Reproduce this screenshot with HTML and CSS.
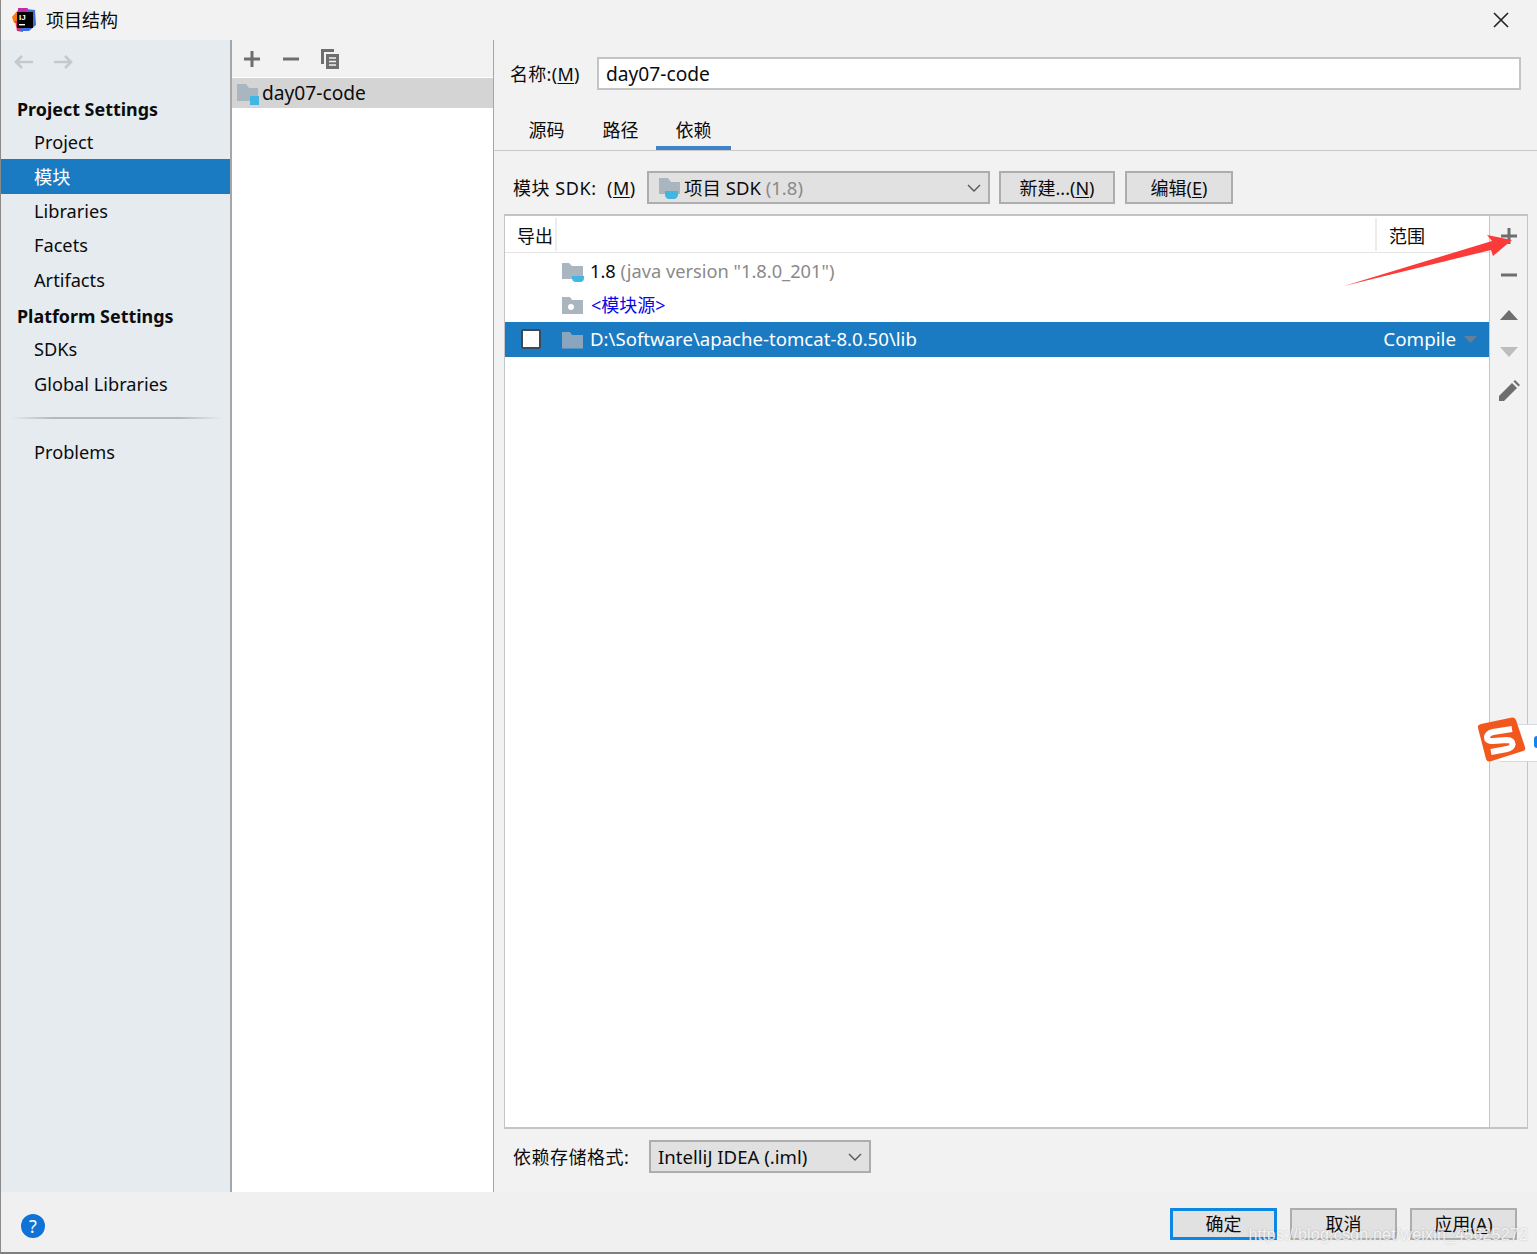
FILE: index.html
```html
<!DOCTYPE html>
<html lang="zh-CN">
<head>
<meta charset="utf-8">
<title>项目结构</title>
<link rel="stylesheet" href="styles.css">
</head>
<body>
<div class="dialog">
  <header class="titlebar">
    <svg class="app-logo" viewBox="0 0 24 24" width="24" height="24">
      <polygon points="0,9 6,2 12,4 8,14 2,15" fill="#f97a12"/>
      <polygon points="3,13 10,12 11,24 5,23" fill="#d6336c"/>
      <polygon points="13,1 23,2 24,17 17,23 8,23" fill="#3f6ee0"/>
      <polygon points="6,0 16,0 14,7 6,7" fill="#c22fa0"/>
      <rect x="5" y="4" width="16" height="16" fill="#000"/>
      <text x="7" y="12" class="logo-text">IJ</text>
      <rect x="7" y="16" width="6" height="1.4" fill="#fff"/>
    </svg>
    <span class="title">项目结构</span>
    <svg class="close" viewBox="0 0 16 16" width="16" height="16"><path d="M1 1 15 15M15 1 1 15" stroke="#222" stroke-width="1.6" fill="none"/></svg>
  </header>

  <main class="main">
    <nav class="sidebar">
      <div class="history">
        <svg viewBox="0 0 20 16" width="20" height="16"><path d="M20 8H3M9 2 3 8l6 6" stroke="#c6c9cb" stroke-width="2.6" fill="none"/></svg>
        <svg viewBox="0 0 20 16" width="20" height="16"><path d="M0 8H17M11 2l6 6-6 6" stroke="#c6c9cb" stroke-width="2.6" fill="none"/></svg>
      </div>
      <div class="nav-head first">Project Settings</div>
      <div class="nav-item">Project</div>
      <div class="nav-item selected">模块</div>
      <div class="nav-item">Libraries</div>
      <div class="nav-item">Facets</div>
      <div class="nav-item">Artifacts</div>
      <div class="nav-head second">Platform Settings</div>
      <div class="nav-item">SDKs</div>
      <div class="nav-item">Global Libraries</div>
      <div class="nav-sep"></div>
      <div class="nav-item">Problems</div>
    </nav>

    <section class="modules">
      <div class="mod-tools">
        <svg viewBox="0 0 16 16" width="16" height="16"><path d="M8 0V16M0 8H16" stroke="#6e6e6e" stroke-width="3"/></svg>
        <svg viewBox="0 0 16 16" width="16" height="16"><path d="M0 8H16" stroke="#6e6e6e" stroke-width="3"/></svg>
        <svg class="copy" viewBox="0 0 20 20" width="20" height="20"><path d="M1 0H14V3H4V15H1Z" fill="#6e6e6e"/><path d="M6 5H19V20H6Z" fill="#6e6e6e"/><path d="M9 9H16M9 12.5H16M9 16H16" stroke="#f2f2f2" stroke-width="1.5"/></svg>
      </div>
      <div class="mod-list">
        <div class="mod-row">
          <svg class="mod-icon" viewBox="0 0 24 24" width="24" height="24"><path d="M1 3H10L13 7H22V20H1Z" fill="#a9b5bf"/><rect x="14" y="15" width="9" height="9" fill="#40b6e0"/></svg>
          <span>day07-code</span>
        </div>
      </div>
    </section>

    <section class="detail">
      <div class="name-row">
        <label class="name-label">名称:(<u>M</u>)</label>
        <div class="name-input">day07-code</div>
      </div>
      <div class="tabs">
        <div class="tab">源码</div>
        <div class="tab middle">路径</div>
        <div class="tab active">依赖</div>
      </div>
      <div class="sdk-row">
        <label class="sdk-label">模块 SDK:&nbsp; (<u>M</u>)</label>
        <div class="combo sdk-combo">
          <svg class="sdk-icon" viewBox="0 0 24 24" width="24" height="24"><path d="M1 2H10L13 6H22V18H1Z" fill="#a9b5bf"/><path d="M7 15H20V19C20 21 18 23 16 23H11C9 23 7 21 7 19Z" fill="#40b6e0"/></svg>
          <span>项目 SDK <span class="muted">(1.8)</span></span>
          <svg class="chev" viewBox="0 0 14 8" width="14" height="8"><path d="M1 1 7 7 13 1" stroke="#555" stroke-width="1.4" fill="none"/></svg>
        </div>
        <div class="btn sdk-new">新建...(<u>N</u>)</div>
        <div class="btn sdk-edit">编辑(<u>E</u>)</div>
      </div>

      <div class="deps">
        <div class="dep-table">
          <div class="dep-head">
            <div class="col-export">导出</div>
            <div class="col-spacer"></div>
            <div class="col-scope">范围</div>
          </div>
          <div class="dep-row">
            <svg class="dep-icon" viewBox="0 0 24 24" width="24" height="24"><path d="M2 5H9L12 8H23V21H2Z" fill="#a9b5bf"/><path d="M12 18H24V20C24 23 22 24 20 24H16C14 24 12 23 12 20Z" fill="#40b6e0"/></svg>
            <span class="dep-text java">1.8 <span class="muted">(java version "1.8.0_201")</span></span>
          </div>
          <div class="dep-row">
            <svg class="dep-icon" viewBox="0 0 24 24" width="24" height="24"><path d="M2 4H10L12 7H23V21H2Z" fill="#a9b5bf"/><circle cx="11" cy="14" r="3" fill="#fff"/></svg>
            <span class="dep-text link">&lt;模块源&gt;</span>
          </div>
          <div class="dep-row selected">
            <div class="check"></div>
            <svg class="dep-icon after-check" viewBox="0 0 24 24" width="24" height="24"><path d="M2 5H10L12 8H23V21.5H2Z" fill="#8aa5bd"/></svg>
            <span class="dep-text path">D:\Software\apache-tomcat-8.0.50\lib</span>
            <span class="scope-val">Compile</span>
            <svg class="scope-caret" viewBox="0 0 13 7" width="13" height="7"><path d="M0 0H13L6.5 7Z" fill="#63809a"/></svg>
          </div>
        </div>
        <div class="dep-tools">
          <svg viewBox="0 0 16 16" width="16" height="16"><path d="M8 0V16M0 8H16" stroke="#6e6e6e" stroke-width="3"/></svg>
          <svg viewBox="0 0 16 16" width="16" height="16"><path d="M0 8H16" stroke="#6e6e6e" stroke-width="3"/></svg>
          <svg class="tool-up" viewBox="0 0 18 16" width="18" height="16"><path d="M0 13 9 3 18 13Z" fill="#6e6e6e"/></svg>
          <svg class="tool-down" viewBox="0 0 18 16" width="18" height="16"><path d="M0 3H18L9 13Z" fill="#bdbdbd"/></svg>
          <svg class="tool-edit" viewBox="0 0 22 22" width="22" height="22"><path d="M1 21V16L14 3 19 8 6 21Z" fill="#6e6e6e"/><path d="M15.5 1.5 17 0 22 5 20.5 6.5Z" fill="#6e6e6e"/></svg>
        </div>
      </div>

      <div class="format-row">
        <label class="format-label">依赖存储格式:</label>
        <div class="combo format-combo">
          <span>IntelliJ IDEA (.iml)</span>
          <svg class="chev" viewBox="0 0 14 8" width="14" height="8"><path d="M1 1 7 7 13 1" stroke="#555" stroke-width="1.4" fill="none"/></svg>
        </div>
      </div>
    </section>
  </main>

  <footer class="footer">
    <div class="help">?</div>
    <div class="actions">
      <div class="btn action primary">确定</div>
      <div class="btn action">取消</div>
      <div class="btn action">应用(<u>A</u>)</div>
    </div>
  </footer>

  <svg class="arrow" viewBox="0 0 175 60" width="175" height="60"><polygon points="1,56 149,11 144,5 169,10 150,26 148,20" fill="#fb3a3a"/></svg>

  <div class="ime">
    <div class="ime-bar"><span class="ime-dot"></span></div>
    <svg class="ime-logo" viewBox="0 0 50 48" width="50" height="48">
      <path d="M1 12Q0 9 4 8L35 1.5Q38 1 39 4L48 31Q49 34 46 35L13 45.5Q10 46 9 43Z" fill="#f2581d"/>
      <path d="M35 13 16 16C8 18 8 26 16 25L30 24C38 24 37 32 30 33L14 36" stroke="#fff" stroke-width="6" fill="none"/>
    </svg>
  </div>

  <div class="watermark">https://blog.csdn.net/weixin_45625272</div>
</div>
</body>
</html>
```

FILE: styles.css
```css
* { box-sizing: border-box; }
html, body { margin: 0; padding: 0; }
body { background: #f2f2f2; }
u { text-underline-offset: 2px; }

.dialog {
  position: relative;
  width: 1537px;
  height: 1254px;
  overflow: hidden;
  display: flex;
  flex-direction: column;
  background: #f2f2f2;
  color: #0c0c0c;
  font: 18.5px/24px "Noto Sans", "Noto Sans CJK SC", sans-serif;
  border-left: 1px solid #8a8a8a;
  border-bottom: 2px solid #7f7f7f;
}

/* title bar */
.titlebar {
  height: 40px;
  flex: none;
  display: flex;
  align-items: center;
  padding: 0 28px 0 11px;
}
.app-logo { flex: none; }
.logo-text { font: bold 8px "Liberation Sans", sans-serif; fill: #fff; }
.title { margin-left: 10px; font-size: 18px; }
.close { margin-left: auto; }

/* layout */
.main { flex: 1; min-height: 0; display: flex; }

/* sidebar */
.sidebar {
  width: 231px;
  flex: none;
  background: #e6ebf0;
  border-right: 2px solid #a6a6a6;
  font-size: 18.2px;
}
.history {
  height: 44px;
  display: flex;
  align-items: center;
  gap: 21px;
  padding: 0 0 0 12px;
}
.nav-head {
  height: 33px;
  margin-top: 2px;
  display: flex;
  align-items: center;
  padding-left: 16px;
  font-weight: 700;
  font-size: 17.9px;
}
.nav-head.first { margin-top: 8px; }
.nav-head.second { padding-top: 2px; }
.nav-item {
  height: 34.4px;
  display: flex;
  align-items: center;
  padding-left: 33px;
}
.nav-item.selected { background: #1a7bc3; color: #fff; }
.nav-sep {
  height: 2px;
  margin: 16px 8px 16px 10px;
  background: linear-gradient(90deg, #e6ebf0, #b4b8bb 20%, #b4b8bb 80%, #e6ebf0);
}

/* module list */
.modules {
  width: 262px;
  flex: none;
  display: flex;
  flex-direction: column;
  background: #fff;
  border-right: 1px solid #a6a6a6;
}
.mod-tools {
  height: 37px;
  flex: none;
  display: flex;
  align-items: center;
  gap: 23px;
  padding: 0 0 0 12px;
  background: #f2f2f2;
}
.copy { margin-left: -2px; }
.mod-list { flex: 1; border-top: 1px solid #fff; }
.mod-row {
  height: 30px;
  display: flex;
  align-items: center;
  padding-left: 4px;
  background: #d4d4d4;
  font-size: 19.2px;
}
.mod-icon { margin-right: 2px; flex: none; }

/* detail */
.detail {
  flex: 1;
  min-width: 0;
  display: flex;
  flex-direction: column;
}
.name-row {
  height: 33px;
  margin-top: 17px;
  display: flex;
  align-items: center;
  padding: 0 16px;
  flex: none;
}
.name-label { width: 87px; flex: none; font-size: 18px; letter-spacing: .3px; }
.name-input {
  flex: 1;
  height: 33px;
  display: flex;
  align-items: center;
  padding-left: 7px;
  background: #fff;
  border: 2px solid #c4c4c4;
  font-size: 19.2px;
}
.tabs {
  height: 61px;
  flex: none;
  display: flex;
  align-items: flex-end;
  padding-left: 16px;
  border-bottom: 1px solid #c9c9c9;
}
.tab {
  height: 32px;
  padding: 0 18.5px;
  font-size: 18px;
  line-height: 24px;
}
.tab.middle { padding: 0 17.5px 0 19.5px; }
.tab.active { padding: 0 19.5px; border-bottom: 4px solid #4083c9; }
.sdk-row {
  height: 33px;
  margin-top: 20px;
  flex: none;
  display: flex;
  align-items: center;
  padding-left: 19px;
}
.sdk-label { width: 134px; flex: none; font-size: 18px; white-space: nowrap; letter-spacing: .55px; }
.combo {
  height: 33px;
  display: flex;
  align-items: center;
  background: #e1e1e1;
  border: 2px solid #adadad;
  flex: none;
}
.sdk-combo { width: 343px; padding: 0 7px 0 9px; }
.sdk-icon { margin-right: 2px; flex: none; }
.chev { margin-left: auto; flex: none; }
.muted { color: #8a8a8a; }
.btn {
  height: 33px;
  display: flex;
  align-items: center;
  justify-content: center;
  background: #e1e1e1;
  border: 2px solid #adadad;
  font-size: 18px;
  flex: none;
}
.sdk-new { width: 116px; margin-left: 9px; }
.sdk-edit { width: 108px; margin-left: 10px; }

/* dependencies */
.deps {
  flex: 1;
  min-height: 0;
  margin: 10px 9px 0 10px;
  display: flex;
  background: #fff;
  border: solid #c4c4c4;
  border-width: 2px 1px;
}
.dep-table { flex: 1; min-width: 0; }
.dep-head {
  height: 37px;
  display: flex;
  align-items: center;
  border-bottom: 1px solid #e4e4e4;
  font-size: 18px;
}
.col-export { width: 52px; height: 33px; padding-left: 12px; line-height: 36px; border-right: 2px solid #ececec; flex: none; }
.col-spacer { flex: 1; }
.col-scope { width: 114px; height: 33px; padding-left: 12px; line-height: 36px; border-left: 2px solid #ececec; flex: none; }
.dep-row {
  height: 34.6px;
  display: flex;
  align-items: center;
  padding-left: 55px;
}
.dep-icon { flex: none; }
.dep-text { margin-left: 6px; white-space: nowrap; }
.java { font-size: 18.25px; padding-top: 1px; }
.path { flex: 1; font-size: 18.6px; }
.link { color: #0a0ae6; font-size: 18px; margin-left: 7px; padding-top: 1px; }
.dep-row.selected { background: #1a7bc3; color: #fff; padding-left: 16px; padding-right: 12px; }
.check {
  width: 20px;
  height: 20px;
  flex: none;
  background: #fff;
  border: 2px solid #3d4a55;
  border-radius: 2px;
}
.after-check { margin-left: 19px; }
.scope-val { font-size: 18.8px; }
.scope-caret { margin-left: 8px; flex: none; }
.dep-tools {
  width: 38px;
  flex: none;
  display: flex;
  flex-direction: column;
  align-items: center;
  gap: 23px;
  padding: 12px 0 0 1px;
  background: #f2f2f2;
  border-left: 1px solid #c4c4c4;
}
.tool-up { margin-top: 1px; }
.tool-down { margin-top: -2px; }
.tool-edit { margin-top: -3px; }
.format-row {
  height: 33px;
  margin: 11px 0 19px;
  flex: none;
  display: flex;
  align-items: center;
  padding-left: 19px;
}
.format-label { width: 136px; flex: none; font-size: 18px; white-space: nowrap; letter-spacing: .5px; }
.format-combo { width: 222px; padding: 0 7px; font-size: 18.6px; }

/* footer */
.footer {
  height: 60px;
  flex: none;
  display: flex;
  align-items: center;
  padding: 4px 20px 0;
  background: #f0f0f0;
}
.help {
  width: 24px;
  height: 24px;
  margin-top: 4px;
  border-radius: 50%;
  background: #0f72d6;
  color: #fff;
  font-size: 18px;
  line-height: 24px;
  text-align: center;
}
.actions { margin-left: auto; display: flex; gap: 13px; }
.action { width: 107px; height: 32px; }
.primary { border: 3px solid #0d87e6; }

/* overlays */
.arrow { position: absolute; left: 1342px; top: 230px; }
.ime { position: absolute; left: 1476px; top: 716px; width: 60px; height: 48px; }
.ime-bar {
  position: absolute;
  left: 22px;
  top: 8px;
  width: 38px;
  height: 38px;
  background: #fff;
  border-bottom: 1px solid #d5dbe6;
  border-top: 1px solid #d5dbe6;
}
.ime-dot {
  position: absolute;
  right: 0;
  top: 11px;
  width: 3px;
  height: 12px;
  border-radius: 4px 0 0 4px;
  background: #1683e8;
}
.ime-logo { position: absolute; left: 0; top: 0; }
.watermark {
  position: absolute;
  right: 9px;
  top: 1225px;
  font: 16px/20px "Liberation Sans", sans-serif;
  letter-spacing: .2px;
  color: rgba(255, 255, 255, .8);
  text-shadow: 0 0 2px rgba(90, 90, 90, .35);
  white-space: nowrap;
}
```
